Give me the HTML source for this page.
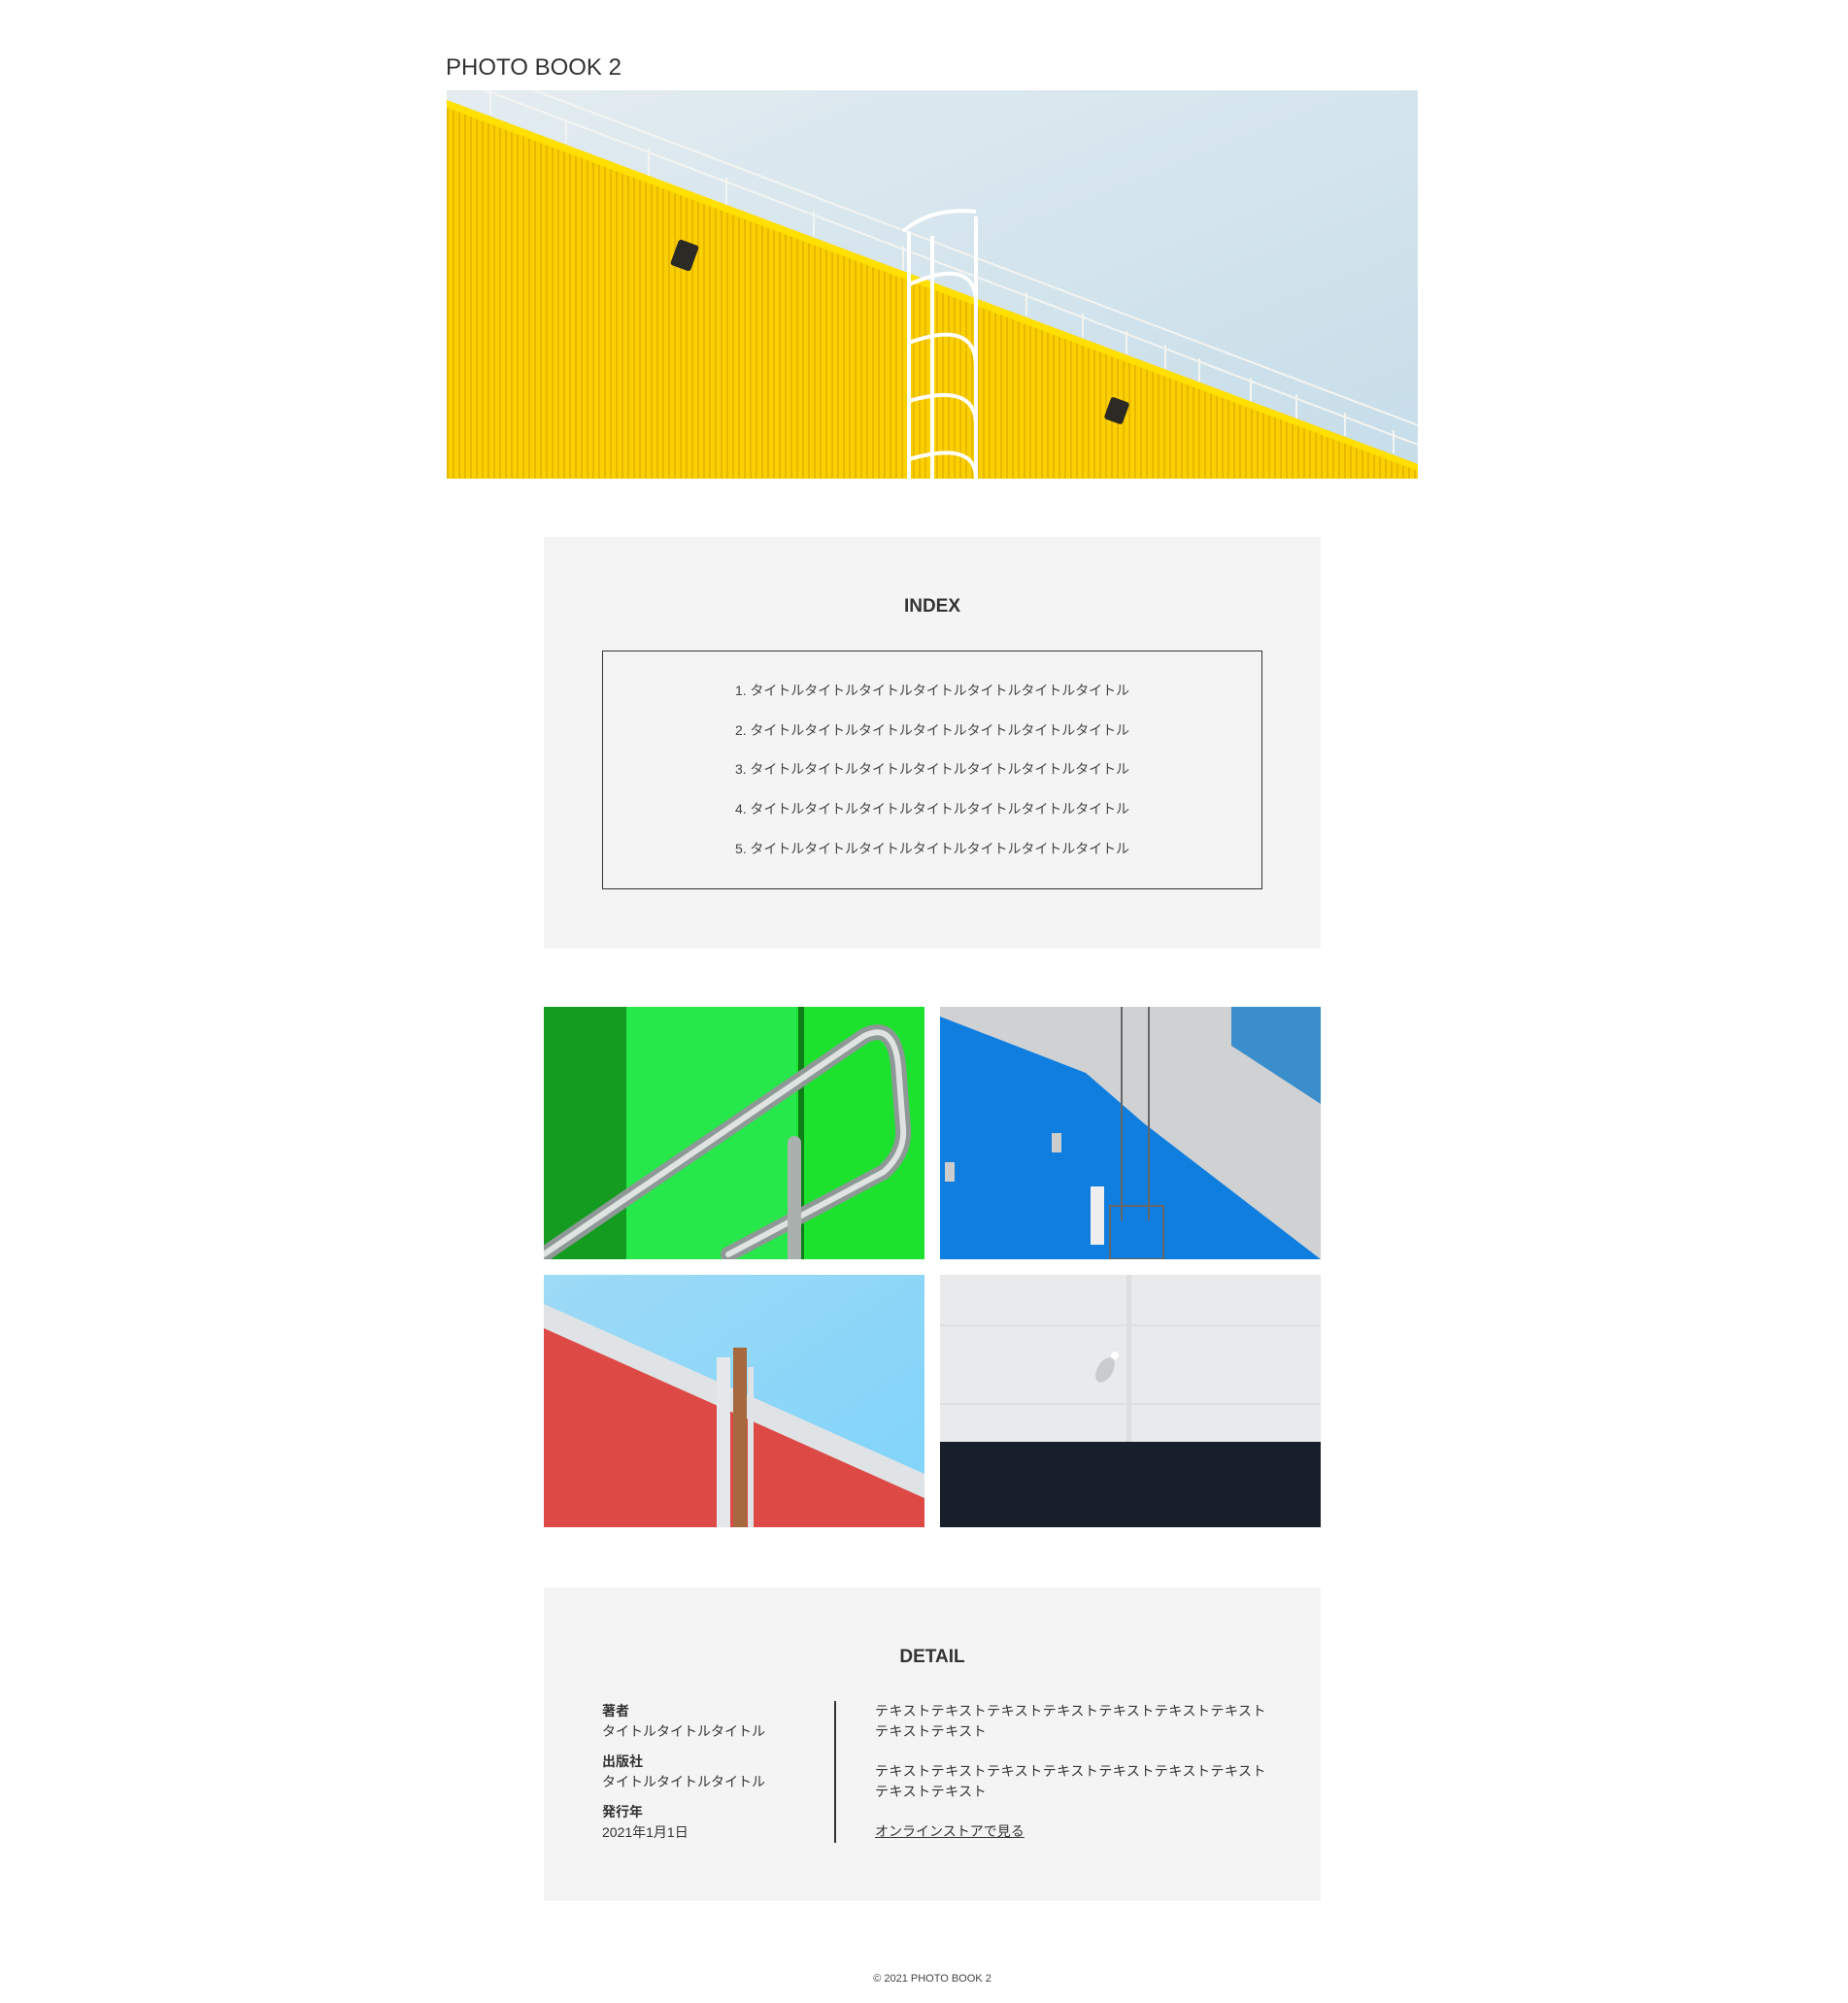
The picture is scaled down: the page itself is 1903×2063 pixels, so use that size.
<!DOCTYPE html>
<html><head><meta charset="utf-8"><style>
*{margin:0;padding:0;box-sizing:border-box}
body{width:1903px;height:2063px;background:#fff;position:relative;overflow:hidden;font-family:"Liberation Sans","Noto Sans CJK JP",sans-serif;color:#333}
.a{position:absolute}
.t{white-space:nowrap}
</style></head><body>
<div class="a t" style="left:459px;top:55px;font-size:24px;color:#333;line-height:30px">PHOTO BOOK 2</div>

<svg class="a" style="left:460px;top:93px" width="1000" height="400" viewBox="0 0 1000 400">
<defs>
<linearGradient id="sky" x1="0" y1="0" x2="1" y2="1"><stop offset="0" stop-color="#e3ecf1"/><stop offset="1" stop-color="#c6dde9"/></linearGradient>
<pattern id="st" width="6" height="10" patternUnits="userSpaceOnUse"><rect width="6" height="10" fill="#fbd000"/><rect width="2" height="10" fill="#e9b800"/></pattern>
</defs>
<rect width="1000" height="400" fill="url(#sky)"/>
<polygon points="0,10 1000,385 1000,400 0,400" fill="url(#st)"/>
<polygon points="0,10 1000,385 1000,392 0,18" fill="#ffe000"/>
<g stroke="#f4f4f0" stroke-width="2" fill="none">
<line x1="40" y1="0" x2="1000" y2="365"/><line x1="90" y1="0" x2="1000" y2="345"/>
<line x1="45" y1="2" x2="45" y2="25"/><line x1="123" y1="30" x2="123" y2="55"/><line x1="208" y1="60" x2="208" y2="88"/><line x1="288" y1="90" x2="288" y2="118"/><line x1="378" y1="125" x2="378" y2="150"/><line x1="470" y1="160" x2="470" y2="185"/>
<line x1="597" y1="208" x2="597" y2="232"/><line x1="655" y1="230" x2="655" y2="254"/><line x1="700" y1="248" x2="700" y2="272"/><line x1="740" y1="262" x2="740" y2="287"/><line x1="775" y1="276" x2="775" y2="300"/><line x1="828" y1="296" x2="828" y2="320"/><line x1="875" y1="313" x2="875" y2="338"/><line x1="925" y1="332" x2="925" y2="356"/><line x1="975" y1="350" x2="975" y2="374"/>
</g>
<g stroke="#fff" stroke-width="4" fill="none">
<line x1="476" y1="145" x2="476" y2="400"/><line x1="545" y1="130" x2="545" y2="400"/><line x1="500" y1="150" x2="500" y2="400"/>
<path d="M470 145 Q500 120 545 125"/><path d="M476 200 Q545 170 545 220"/><path d="M476 260 Q545 235 545 285"/><path d="M476 320 Q545 300 545 345"/><path d="M476 380 Q545 360 545 400"/>
</g>
<rect x="234" y="156" width="22" height="28" rx="3" fill="#2b2a25" transform="rotate(20 245 170)"/>
<rect x="680" y="318" width="20" height="24" rx="3" fill="#2b2a25" transform="rotate(20 690 330)"/>
</svg>

<div class="a" style="left:560px;top:553px;width:800px;height:424px;background:#f4f4f4"></div>
<div class="a t" style="left:560px;width:800px;top:614px;text-align:center;font-size:19px;font-weight:bold;color:#333">INDEX</div>
<div class="a" style="left:620px;top:670px;width:680px;height:246px;border:1px solid #333"></div>
<div class="a" style="left:560px;width:800px;top:691px;text-align:center;font-size:14px;line-height:40.7px;letter-spacing:-0.05px;color:#444">
<div>1. タイトルタイトルタイトルタイトルタイトルタイトルタイトル</div>
<div>2. タイトルタイトルタイトルタイトルタイトルタイトルタイトル</div>
<div>3. タイトルタイトルタイトルタイトルタイトルタイトルタイトル</div>
<div>4. タイトルタイトルタイトルタイトルタイトルタイトルタイトル</div>
<div>5. タイトルタイトルタイトルタイトルタイトルタイトルタイトル</div>
</div>

<svg class="a" style="left:560px;top:1037px" width="392" height="260" viewBox="0 0 392 260">
<rect width="392" height="260" fill="#1ce22e"/>
<rect width="85" height="260" fill="#139c1f"/>
<rect x="85" width="175" height="260" fill="#27e84a"/>
<rect x="262" width="6" height="260" fill="#0f7d18"/>
<g fill="none" stroke-linecap="round">
<path d="M0 255 L330 30 Q360 15 365 60 L370 125 Q372 150 350 170 L190 255" stroke="#8e9896" stroke-width="16"/>
<path d="M0 255 L330 30 Q360 15 365 60 L370 125 Q372 150 350 170 L190 255" stroke="#dfe4e3" stroke-width="6"/>
<line x1="258" y1="140" x2="258" y2="260" stroke="#a9b0ae" stroke-width="14"/>
</g>
</svg>

<svg class="a" style="left:968px;top:1037px" width="392" height="260" viewBox="0 0 392 260">
<rect width="392" height="260" fill="#d0d1d3"/>
<polygon points="0,10 150,68 210,120 392,260 0,260" fill="#0f7edf"/>
<polygon points="300,0 392,0 392,100 300,40" fill="#3a8ecb"/>
<g stroke="#666" stroke-width="2" fill="none"><line x1="187" y1="0" x2="187" y2="220"/><line x1="215" y1="0" x2="215" y2="220"/>
<rect x="175" y="205" width="55" height="55"/></g>
<rect x="155" y="185" width="14" height="60" fill="#eee"/>
<rect x="115" y="130" width="10" height="20" fill="#ccc"/><rect x="5" y="160" width="10" height="20" fill="#ccc"/>
</svg>

<svg class="a" style="left:560px;top:1313px" width="392" height="260" viewBox="0 0 392 260">
<defs><linearGradient id="bl" x1="0" y1="0" x2="1" y2="1"><stop offset="0" stop-color="#9ddaf6"/><stop offset="1" stop-color="#7fd3fb"/></linearGradient></defs>
<rect width="392" height="260" fill="url(#bl)"/>
<polygon points="0,30 392,205 392,260 0,260" fill="#dfe3e6"/>
<polygon points="0,55 392,230 392,260 0,260" fill="#dd4a46"/>
<rect x="178" y="85" width="14" height="175" fill="#e4e8ea"/>
<rect x="195" y="75" width="14" height="185" fill="#a5683f"/>
<rect x="210" y="95" width="6" height="165" fill="#dfe3e6"/>
</svg>

<svg class="a" style="left:968px;top:1313px" width="392" height="260" viewBox="0 0 392 260">
<rect width="392" height="260" fill="#e9eaeb"/>
<line x1="0" y1="52" x2="392" y2="52" stroke="#d2d4d6"/><line x1="0" y1="133" x2="392" y2="133" stroke="#d2d4d6"/>
<rect x="192" width="5" height="172" fill="#dcdee0"/>
<rect y="172" width="392" height="88" fill="#17202a"/>
<ellipse cx="170" cy="98" rx="8" ry="14" fill="#c9ccce" transform="rotate(30 170 98)"/>
<circle cx="180" cy="83" r="4" fill="#fff"/>
</svg>

<div class="a" style="left:560px;top:1635px;width:800px;height:323px;background:#f4f4f4"></div>
<div class="a t" style="left:560px;width:800px;top:1696px;text-align:center;font-size:19px;font-weight:bold;color:#333">DETAIL</div>
<div class="a" style="left:620px;top:1752px;font-size:14px;line-height:21px;color:#333">
<div style="font-weight:bold">著者</div><div>タイトルタイトルタイトル</div>
<div style="font-weight:bold;margin-top:10px">出版社</div><div>タイトルタイトルタイトル</div>
<div style="font-weight:bold;margin-top:10px">発行年</div><div>2021年1月1日</div>
</div>
<div class="a" style="left:859px;top:1752px;width:2px;height:146px;background:#333"></div>
<div class="a" style="left:901px;top:1752px;font-size:14px;line-height:21px;letter-spacing:0.5px;color:#333;white-space:nowrap">
<div>テキストテキストテキストテキストテキストテキストテキスト</div><div>テキストテキスト</div>
<div style="margin-top:20px">テキストテキストテキストテキストテキストテキストテキスト</div><div>テキストテキスト</div>
<div style="margin-top:20px;text-decoration:underline;letter-spacing:0px">オンラインストアで見る</div>
</div>

<div class="a t" style="left:560px;width:800px;top:2032px;text-align:center;font-size:11px;color:#444">© 2021 PHOTO BOOK 2</div>
</body></html>
